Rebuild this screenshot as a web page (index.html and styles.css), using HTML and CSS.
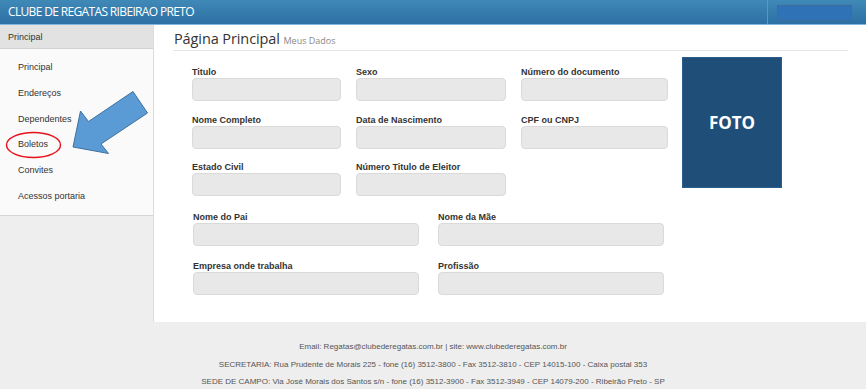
FILE: index.html
```html
<!DOCTYPE html>
<html lang="pt-BR">
<head>
<meta charset="utf-8">
<title>Clube de Regatas Ribeirão Preto</title>
<link rel="stylesheet" href="styles.css">
</head>
<body>
<header class="topbar">
  <div class="brand">CLUBE DE REGATAS RIBEIRAO PRETO</div>
  <div class="top-right"><span class="top-btn"></span></div>
</header>
<div class="layout">
  <aside class="sidebar">
    <div class="side-head">Principal</div>
    <ul class="menu">
      <li>Principal</li>
      <li>Endereços</li>
      <li>Dependentes</li>
      <li>Boletos</li>
      <li>Convites</li>
      <li>Acessos portaria</li>
    </ul>
    <svg class="annot" width="153" height="170" viewBox="0 0 153 170">
      <ellipse cx="33.5" cy="97" rx="27" ry="12.5" fill="none" stroke="#e8121b" stroke-width="1.4"/>
      <polygon points="73,99 80.5,63 88.5,73.5 133,43.5 147.5,65 101,96 108.5,105.5" fill="#5b9bd5" stroke="#41719c" stroke-width="1"/>
    </svg>
  </aside>
  <main class="main">
    <h1 class="page-title">Página Principal <small>Meus Dados</small></h1>
    <div class="top-section">
      <div class="grid3">
        <div class="field"><label>Titulo</label><div class="input"></div></div>
        <div class="field"><label>Sexo</label><div class="input"></div></div>
        <div class="field"><label>Número do documento</label><div class="input"></div></div>
        <div class="field"><label>Nome Completo</label><div class="input"></div></div>
        <div class="field"><label>Data de Nascimento</label><div class="input"></div></div>
        <div class="field"><label>CPF ou CNPJ</label><div class="input"></div></div>
        <div class="field"><label>Estado Civil</label><div class="input"></div></div>
        <div class="field"><label>Número Titulo de Eleitor</label><div class="input"></div></div>
      </div>
      <div class="photo">FOTO</div>
    </div>
    <div class="grid2">
      <div class="field"><label>Nome do Pai</label><div class="input"></div></div>
      <div class="field"><label>Nome da Mãe</label><div class="input"></div></div>
      <div class="field"><label>Empresa onde trabalha</label><div class="input"></div></div>
      <div class="field"><label>Profissão</label><div class="input"></div></div>
    </div>
  </main>
</div>
<footer class="footer">
  <p>Email: Regatas@clubederegatas.com.br | site: www.clubederegatas.com.br</p>
  <p>SECRETARIA: Rua Prudente de Morais 225 - fone (16) 3512-3800 - Fax 3512-3810 - CEP 14015-100 - Caixa postal 353</p>
  <p>SEDE DE CAMPO: Via José Morais dos Santos s/n - fone (16) 3512-3900 - Fax 3512-3949 - CEP 14079-200 - Ribeirão Preto - SP</p>
</footer>
</body>
</html>
```
FILE: styles.css
```css
* { box-sizing: border-box; }
html, body { margin: 0; padding: 0; }
body {
  background: #eeeeee;
  font-family: "Liberation Sans", Arial, sans-serif;
  color: #333;
}
.topbar {
  height: 25px;
  display: flex;
  justify-content: space-between;
  background: linear-gradient(#3f89b7, #2c70a4);
  border-bottom: 1px solid #84b5da;
}
.brand {
  color: #fff;
  font-family: "Open Sans", sans-serif;
  font-size: 12px;
  letter-spacing: -0.65px;
  line-height: 24px;
  padding-left: 8px;
}
.top-right {
  width: 99px;
  border-left: 1px solid #5b97c2;
  padding: 5px 0 0 9px;
}
.top-btn {
  display: block;
  width: 75px;
  height: 16px;
  background: #2f72b6;
  border: 1px solid #3d6c9e;
}
.layout {
  display: flex;
  height: 297px;
}
.sidebar {
  position: relative;
  width: 154px;
  flex: none;
  border-right: 1px solid #dcdcdc;
}
.side-head {
  height: 24px;
  background: #e2e2e2;
  border-bottom: 1px solid #d2d2d2;
  font-size: 9px;
  line-height: 24px;
  padding-left: 8px;
  color: #333;
}
.menu {
  list-style: none;
  margin: 0;
  padding: 6px 0 5px;
  background: #fafafa;
  border-bottom: 1px solid #d6d6d6;
}
.menu li {
  height: 25.8px;
  line-height: 25.8px;
  padding-left: 18px;
  font-size: 9px;
  color: #333;
}
.annot {
  position: absolute;
  left: 0;
  top: 23px;
}
.main {
  flex: 1;
  background: #fff;
  padding: 0 18px 0 19px;
}
.page-title {
  margin: 0;
  height: 26px;
  border-bottom: 1px solid #e4e4e4;
  font-family: "Open Sans", sans-serif;
  font-weight: 400;
  font-size: 14.5px;
  letter-spacing: -0.1px;
  line-height: 27px;
  color: #333;
  padding-left: 1px;
}
.page-title small {
  font-size: 9px;
  letter-spacing: 0;
  color: #888;
}
.top-section {
  display: flex;
  align-items: flex-start;
  padding-left: 19px;
}
.grid3 {
  display: grid;
  grid-template-columns: 149px 150px 147px;
  column-gap: 15px;
  margin-top: 16px;
}
.field label {
  display: block;
  font-size: 9px;
  font-weight: bold;
  line-height: 10px;
  color: #333;
}
.field .input {
  height: 23px;
  margin-top: 1px;
  margin-bottom: 13.5px;
  background: #e8e8e8;
  border: 1px solid #dadada;
  border-radius: 4px;
}
.grid2 .field .input {
  margin-bottom: 15px;
}
.photo {
  width: 100px;
  height: 131px;
  margin: 6px 0 0 14px;
  background: #1f4e79;
  border: 1px solid #2c5d8c;
  color: #fff;
  font-family: "Open Sans", sans-serif;
  font-weight: bold;
  font-size: 17px;
  display: flex;
  align-items: center;
  justify-content: center;
}
.grid2 {
  display: grid;
  grid-template-columns: 226px 226px;
  column-gap: 19px;
  padding-left: 20px;
  margin-top: 2px;
}
.footer {
  text-align: center;
  padding-top: 16px;
  font-size: 8px;
  color: #555;
}
.footer p {
  margin: 0;
  line-height: 17.7px;
}
```
